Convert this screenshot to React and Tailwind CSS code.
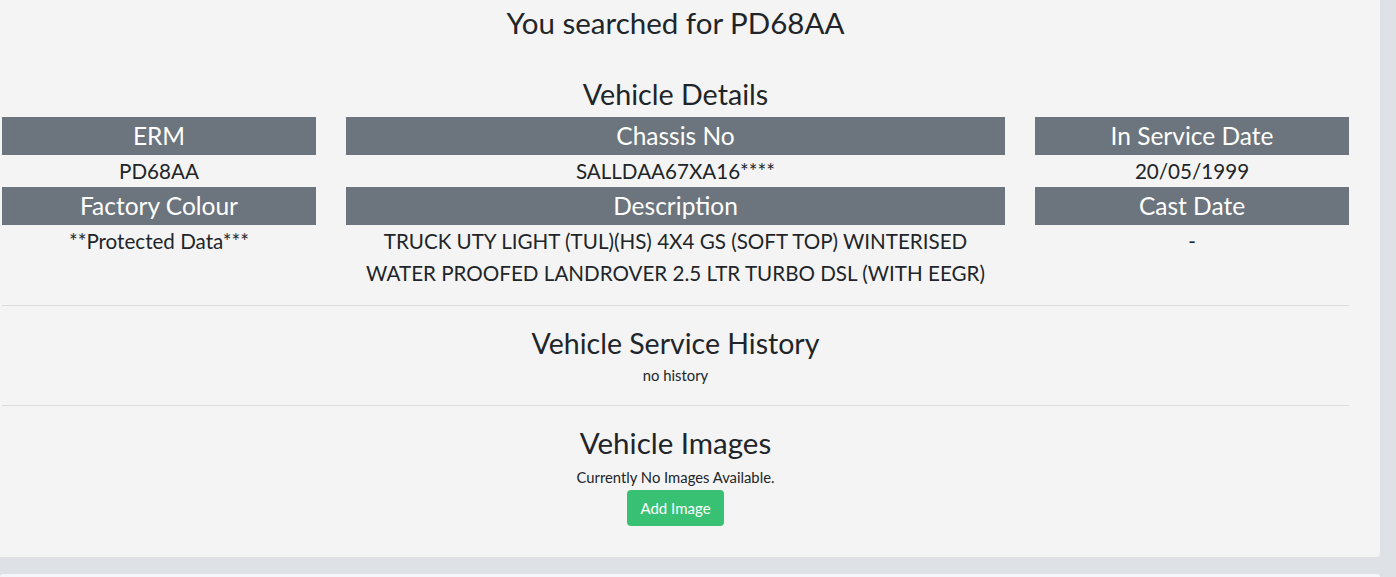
import React from 'react';

const ROWS = [
  [
    { head: 'ERM', value: ['PD68AA'] },
    { head: 'Chassis No', value: ['SALLDAA67XA16****'] },
    { head: 'In Service Date', value: ['20/05/1999'] },
  ],
  [
    { head: 'Factory Colour', value: ['**Protected Data***'] },
    {
      head: 'Description',
      value: [
        'TRUCK UTY LIGHT (TUL)(HS) 4X4 GS (SOFT TOP) WINTERISED',
        'WATER PROOFED LANDROVER 2.5 LTR TURBO DSL (WITH EEGR)',
      ],
    },
    { head: 'Cast Date', value: ['-'] },
  ],
];

function Cell({ head, value, wide }) {
  return (
    <div className={wide ? 'w-[659px] shrink-0' : 'w-[314px] shrink-0'}>
      <div className="h-[38px] bg-[#6c757d] text-white text-[24.5px] leading-[38px] text-center">{head}</div>
      <div className="text-[20.6px] leading-[32px] text-center text-[#212529]">
        {value.map((line, i) => (
          <div key={i}>{line}</div>
        ))}
      </div>
    </div>
  );
}

export default function App() {
  return (
    <div className="min-h-[577px] bg-[#dee2e6] font-['Lato',sans-serif] text-[#212529]">
      <div className="w-[1380px] h-[557px] bg-[#f4f4f4] rounded-br-[4px] pl-[2px]">
        <div className="w-[1347px] flex flex-col">
          <h1 className="text-[29.5px] leading-[46px] text-center">You searched for PD68AA</h1>
          <h2 className="mt-[25px] text-[28.7px] leading-[46px] text-center">Vehicle Details</h2>
          {ROWS.map((row, r) => (
            <div key={r} className="flex gap-[30px]">
              {row.map((c, i) => (
                <Cell key={i} {...c} wide={i === 1} />
              ))}
            </div>
          ))}
          <hr className="mt-[16px] border-t border-[#dcdcdc]" />
          <h2 className="mt-[18px] text-[28.5px] leading-[38px] text-center">Vehicle Service History</h2>
          <p className="text-[14.8px] leading-[21px] text-center mt-[3px]">no history</p>
          <hr className="mt-[19px] border-t border-[#dcdcdc]" />
          <h2 className="mt-[18px] text-[29.5px] leading-[38px] text-center">Vehicle Images</h2>
          <p className="text-[14.8px] leading-[21px] text-center mt-[5px]">Currently No Images Available.</p>
          <div className="flex justify-center mt-[2px]">
            <button className="w-[97px] h-[36px] rounded-[4px] bg-[#38c172] text-white text-[15px]">Add Image</button>
          </div>
        </div>
      </div>
      <div className="mt-[17px] w-[1380px] h-[3px] bg-[#f4f6f9] rounded-t-[4px]" />
    </div>
  );
}
